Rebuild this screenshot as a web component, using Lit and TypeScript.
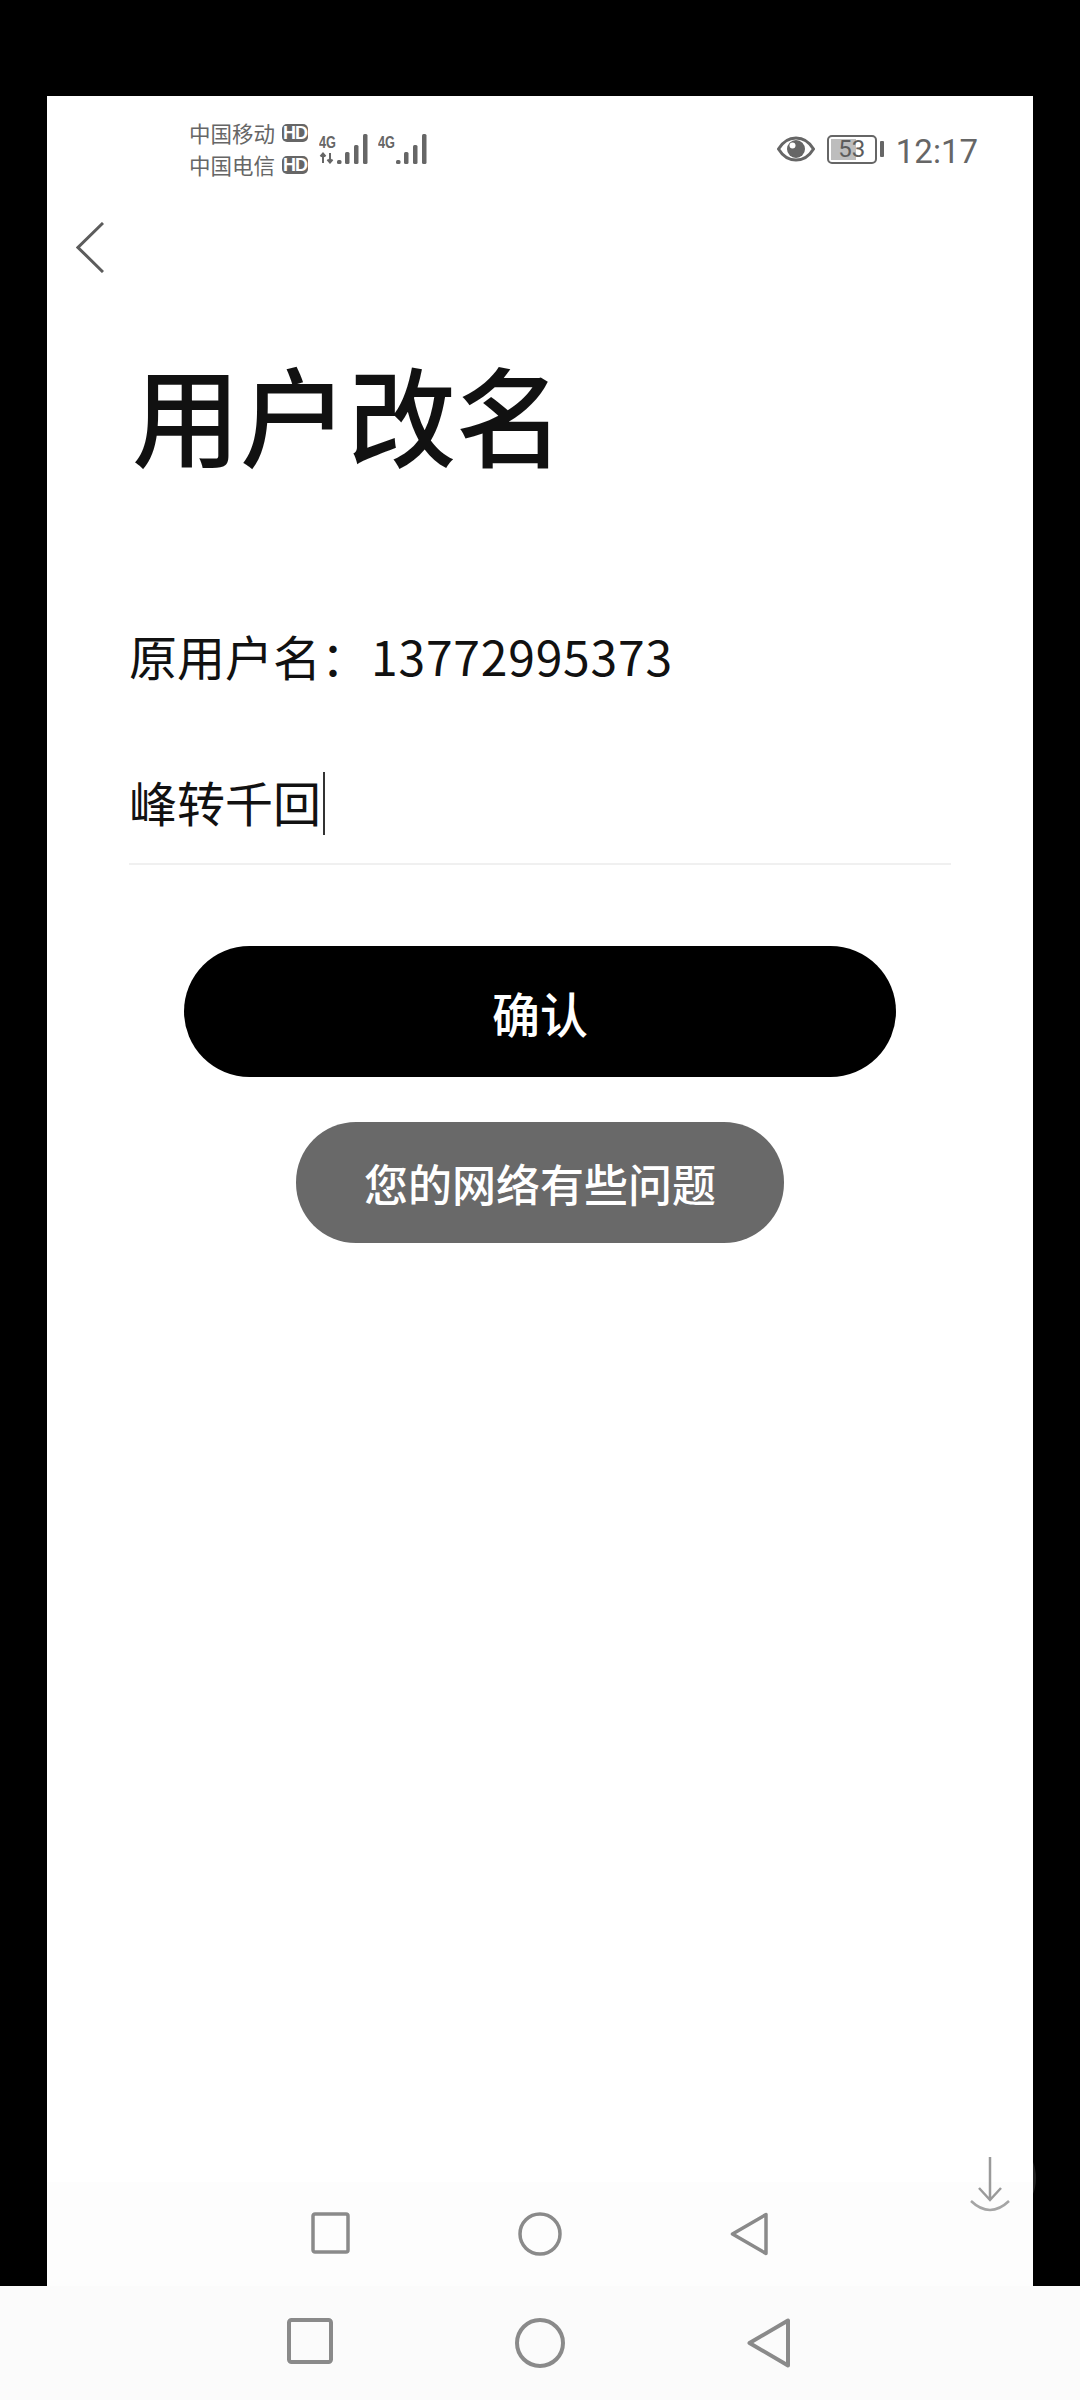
import { LitElement, html, css, svg } from "lit";
import { customElement } from "lit/decorators.js";

const signal = (second: boolean) => svg`
  <svg width="50" height="32" viewBox="0 0 50 32" fill="#666">
    <text x="0" y="16" font-family="'Liberation Sans', sans-serif" font-weight="700" font-size="17" textLength="17" lengthAdjust="spacingAndGlyphs">4G</text>
    ${second ? svg`<path d="M4 31V22M1.500 24.500 4 21.500 6.500 24.500M11 21V30M8.500 27.500 11 30.500 13.500 27.500" fill="none" stroke="#666" stroke-width="2"/>` : null}
    <rect x="18" y="28" width="4.500" height="4" rx="1.500"/>
    <rect x="26" y="20" width="4.500" height="12" rx="1.500"/>
    <rect x="35" y="13" width="4.500" height="19" rx="1.500"/>
    <rect x="44" y="2" width="4.500" height="30" rx="1.500"/>
  </svg>`;

@customElement("app-root")
export class AppRoot extends LitElement {
  static styles = css`
    :host {
      position: relative;
      display: flex;
      flex-direction: column;
      width: 1080px;
      height: 2400px;
      background: #000;
      font-family: "Noto Sans CJK SC", "Noto Sans", sans-serif;
      overflow: hidden;
    }
    .screen {
      flex: 1;
      margin: 96px 47px 0;
      background: #fff;
      display: flex;
      flex-direction: column;
      min-height: 0;
    }
    .status {
      height: 106px;
      padding: 0 55px 0 142px;
      display: flex;
      align-items: center;
      justify-content: space-between;
      color: #666;
      flex: none;
    }
    .left, .right { display: flex; align-items: center; }
    .carriers { display: flex; flex-direction: column; font-size: 21.5px; line-height: 32px; }
    .carrier { display: flex; align-items: center; gap: 7px; }
    .hd {
      width: 26px;
      height: 18px;
      border-radius: 5px;
      background: #666;
      color: #fff;
      font: 700 18px/18px "Liberation Sans", sans-serif;
      letter-spacing: -1px;
      text-align: center;
    }
    .sigs { display: flex; gap: 9px; margin-left: 11px; margin-top: -2px; }
    .battery {
      position: relative;
      width: 50px;
      height: 29px;
      box-sizing: border-box;
      border: 2.5px solid #666;
      border-radius: 5px;
      margin-left: 12px;
      display: flex;
      align-items: center;
      justify-content: center;
      font: 400 24px/24px Roboto, sans-serif;
      color: #5c5c5c;
      overflow: hidden;
    }
    .fill { position: absolute; left: 2px; top: 2px; bottom: 2px; width: 25px; background: #bdbdbd; }
    .pct { position: relative; }
    .nub { width: 4px; height: 16px; background: #666; border-radius: 1px; margin-left: 3px; }
    .time { font: 400 33px/40px Roboto, sans-serif; color: #666; margin: 6px 0 0 12px; }
    .back { display: block; margin: 20px 0 0 29px; flex: none; }
    h1 {
      margin: 79px 0 0;
      padding-left: 85px;
      font-size: 108px;
      line-height: 120px;
      font-weight: 500;
      color: #111;
      flex: none;
    }
    .origin {
      margin: 151px 0 0;
      padding-left: 82px;
      font-size: 48px;
      line-height: 64px;
      color: #111;
      font-weight: 400;
      flex: none;
    }
    .digits { letter-spacing: 0.8px; margin-left: 2px; }
    .field {
      margin: 82px 82px 0 82px;
      height: 96px;
      box-sizing: border-box;
      border-bottom: 2px solid #f0f0f0;
      display: flex;
      align-items: flex-start;
      flex: none;
    }
    .value { font-size: 48px; line-height: 64px; color: #111; font-weight: 400; }
    .caret { width: 1.5px; height: 63px; background: #333; margin: 3px 0 0 2px; }
    .primary {
      margin: 81px 137px 0;
      height: 131px;
      border-radius: 66px;
      background: #000;
      color: #fff;
      font-size: 48px;
      font-weight: 500;
      display: flex;
      align-items: center;
      justify-content: center;
      flex: none;
    }
    .toast {
      align-self: center;
      margin-top: 45px;
      width: 488px;
      height: 121px;
      border-radius: 60px;
      background: #696969;
      color: #fff;
      font-size: 44px;
      font-weight: 500;
      display: flex;
      align-items: center;
      justify-content: center;
      flex: none;
    }
    .spacer { flex: 1; }
    .nav {
      background: #fdfdfd;
      display: flex;
      align-items: flex-start;
      justify-content: center;
      box-sizing: border-box;
      flex: none;
    }
    .nav.inner { height: 104px; gap: 168px; padding: 30px 1px 0 0; }
    .nav.outer { height: 114px; background: #fbfbfb; gap: 182px; padding: 32px 3px 0 0; }
    .download {
      position: absolute;
      left: 944px;
      top: 2132px;
      width: 92px;
      height: 92px;
      border-radius: 50%;
      background: rgba(255, 255, 255, 0.12);
      box-sizing: border-box;
      padding-top: 24px;
      display: flex;
      justify-content: center;
    }
    svg { display: block; flex: none; }
  `;

  render() {
    return html`
      <div class="screen">
        <div class="status">
          <div class="left">
            <div class="carriers">
              <div class="carrier"><span>中国移动</span><span class="hd">HD</span></div>
              <div class="carrier"><span>中国电信</span><span class="hd">HD</span></div>
            </div>
            <div class="sigs">${signal(true)}${signal(false)}</div>
          </div>
          <div class="right">
            <svg width="38" height="26" viewBox="0 0 38 26">
              <path d="M1.500 13C6 5.500 12 2 19 2s13 3.500 17.500 11C32 20.500 26 24 19 24S6 20.500 1.500 13z" fill="none" stroke="#666" stroke-width="3"/>
              <circle cx="19" cy="13" r="9" fill="#666"/>
              <circle cx="15.500" cy="9.500" r="3" fill="#fff"/>
            </svg>
            <div class="battery"><span class="fill"></span><span class="pct">53</span></div>
            <span class="nub"></span>
            <span class="time">12:17</span>
          </div>
        </div>
        <svg class="back" width="28" height="51" viewBox="0 0 28 51">
          <path d="M27 1 2 25.500 27 50" fill="none" stroke="#5c5c5c" stroke-width="3"/>
        </svg>
        <h1>用户改名</h1>
        <p class="origin">原用户名：<span class="digits">13772995373</span></p>
        <div class="field"><span class="value">峰转千回</span><span class="caret"></span></div>
        <div class="primary">确认</div>
        <div class="toast">您的网络有些问题</div>
        <div class="spacer"></div>
        <div class="nav inner">
          <svg width="39" height="42" viewBox="0 0 39 42"><rect x="2" y="2" width="35" height="38" rx="2" fill="none" stroke="#8a8a8a" stroke-width="3.500"/></svg>
          <svg width="44" height="44" viewBox="0 0 44 44"><circle cx="22" cy="22" r="20" fill="none" stroke="#8a8a8a" stroke-width="3.500"/></svg>
          <svg width="38" height="44" viewBox="0 0 38 44"><path d="M36 2.500V41.500L2.500 22z" fill="none" stroke="#8a8a8a" stroke-width="3.500" stroke-linejoin="round"/></svg>
        </div>
      </div>
      <div class="download">
        <svg width="44" height="56" viewBox="0 0 44 56">
          <path d="M22 1V44M11 32l11 12 11-12" fill="none" stroke="#9a9a9a" stroke-width="2.500"/>
          <path d="M3 45Q22 63 41 45" fill="none" stroke="#a5a5a5" stroke-width="2.500"/>
        </svg>
      </div>
      <div class="nav outer">
        <svg width="46" height="46" viewBox="0 0 46 46"><rect x="2" y="2" width="42" height="42" rx="2.500" fill="none" stroke="#8a8a8a" stroke-width="4"/></svg>
        <svg width="50" height="50" viewBox="0 0 50 50"><circle cx="25" cy="25" r="23" fill="none" stroke="#8a8a8a" stroke-width="4"/></svg>
        <svg width="43" height="50" viewBox="0 0 43 50"><path d="M41 2.500V47.500L2.500 25z" fill="none" stroke="#8a8a8a" stroke-width="4" stroke-linejoin="round"/></svg>
      </div>
    `;
  }
}
